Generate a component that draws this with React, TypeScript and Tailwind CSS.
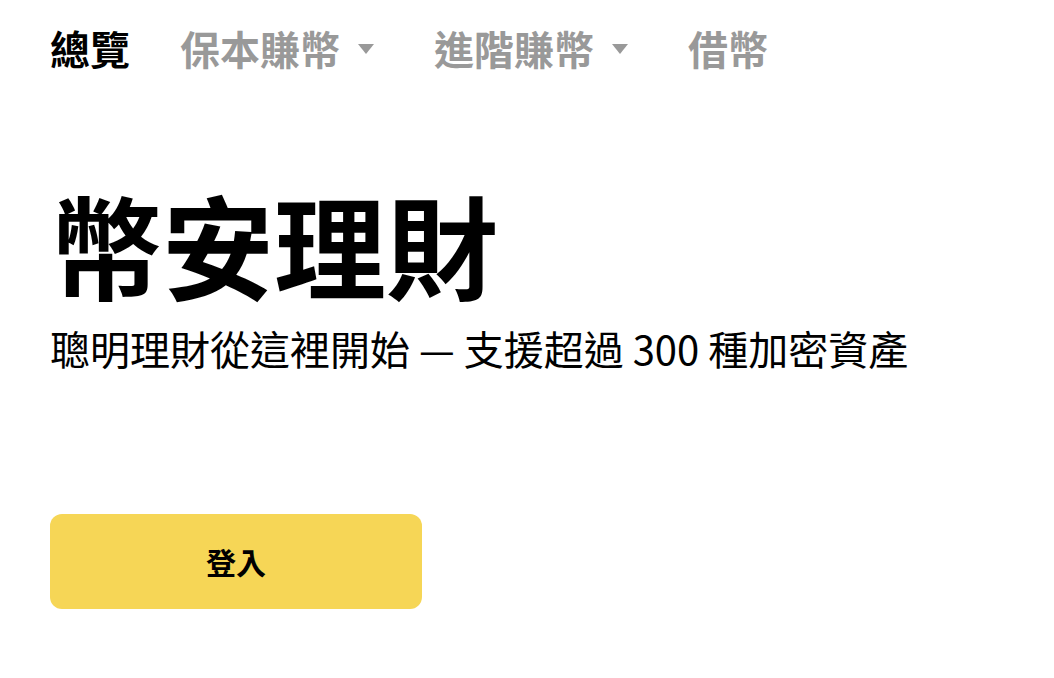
import { ReactNode } from "react";

const font = { fontFamily: '"Noto Sans CJK TC", "Noto Sans", sans-serif' };

function Caret() {
  return (
    <svg width="18" height="12" viewBox="0 0 18 12" className="ml-[17px] mr-[9px] mt-[2px]">
      <path d="M1 1h16L9 11z" fill="#999999" />
    </svg>
  );
}

function NavItem({ children, active, menu }: { children: ReactNode; active?: boolean; menu?: boolean }) {
  return (
    <div className="flex items-center">
      <span className={active ? "text-black" : "text-[#999999]"}>{children}</span>
      {menu && <Caret />}
    </div>
  );
}

export default function App() {
  return (
    <div className="min-h-[678px] w-[1054px] bg-white px-[50px]" style={font}>
      <nav className="flex h-[96px] items-center gap-[50px] text-[40px] font-bold leading-none">
        <NavItem active>總覽</NavItem>
        <NavItem menu>保本賺幣</NavItem>
        <NavItem menu>進階賺幣</NavItem>
        <NavItem>借幣</NavItem>
      </nav>

      <section className="mt-[91px]">
        <h1 className="text-[112px] font-bold leading-[112px] text-black">幣安理財</h1>
        <p className="mt-[23px] text-[40px] leading-[52px] text-black">
          聰明理財從這裡開始 — 支援超過 300 種加密資產
        </p>
      </section>

      <button className="mt-[140px] flex h-[95px] w-[372px] items-center justify-center rounded-[12px] bg-[#f6d656] text-[30px] font-bold text-black">
        登入
      </button>
    </div>
  );
}
